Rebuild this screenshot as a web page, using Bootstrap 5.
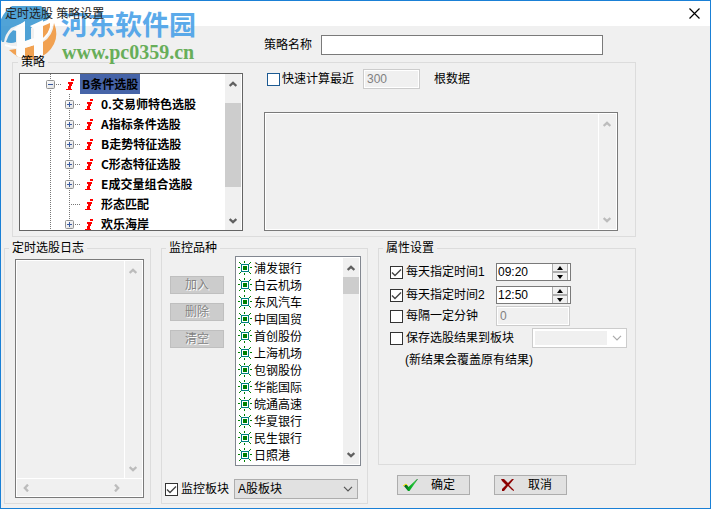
<!DOCTYPE html>
<html lang="zh-CN">
<head>
<meta charset="utf-8">
<meta name="viewport" content="width=device-width, initial-scale=1">
<title>定时选股 策略设置</title>
<link href="https://cdn.jsdelivr.net/npm/bootstrap@5.3.0/dist/css/bootstrap.min.css" rel="stylesheet">
<style>
body{font-family:"Liberation Sans","Noto Sans CJK SC",sans-serif;font-size:12px;line-height:14px;color:#000;background:#f0f0f0}
.window{min-height:100vh;border:1px solid #1a80d6;padding-bottom:4px}
.titlebar{height:25px;background:#fff;padding:0 10px 0 4px;color:#222}
.plain{border:0;background:none;padding:0;line-height:0;display:block}
.workspace{padding:0 74px 0 3px}
.name-row{padding:9px 33px 0 260px;gap:9px}
.field{height:20px;min-width:0;border:1px solid #7a7a7a;border-radius:0;background:#fff;padding:0 3px;font-size:12px;line-height:14px;color:#000;outline-offset:0}
.field:disabled{border:1px solid #ccc;background:#f0f0f0;box-shadow:inset 0 0 0 1px #fff;color:#808080}
.group{border:1px solid #dcdcdc;margin:0;padding:0;min-width:0}
.group > legend{float:none;width:auto;margin:0 0 0 5px;padding:0 3px;font-size:12px;line-height:14px}
.over{position:relative;z-index:2}
.strategy{margin:0 0 4px 8px}
.strategy-body{display:grid;grid-template-columns:224fr 354fr;gap:21px;padding:0 17px 5px 6px}
.lower{display:grid;grid-template-columns:147fr 207fr 258fr;gap:10px}
.lower legend{margin-left:4px}
.tree{height:158px;margin-top:4px;border:1px solid #646464;background:#fff;padding-right:1px;overflow:hidden}
.tree-list{margin:0;padding:0 0 0 26px;list-style:none;overflow:hidden;font-family:"Noto Sans CJK SC",sans-serif;font-weight:700}
.tree-list li{display:flex;height:20px;align-items:center;white-space:nowrap}
.tree-list svg{display:block;flex:none}
.node{line-height:20px;padding:0 2px;color:#000;text-decoration:none}
.node.chosen{background:#4664a8}
.scroll-v{width:16px;flex:none;background:#f0f0f0;display:flex;flex-direction:column}
.scroll-v button,.scroll-h button{flex:none;display:flex;align-items:center;justify-content:center;color:#606060}
.scroll-v button{height:19px}
.thumb{background:#cdcdcd}
.scroll-v.muted button,.scroll-h.muted button{color:#bcbcbc}
.sunken{border:1px solid #7a7a7a;box-shadow:inset 0 0 0 1px #fff;padding:1px}
.sunken textarea{border:0;background:none;resize:none;min-width:0;padding:2px;font-size:12px;display:block}
.sunken .scroll-v{width:18px;border-left:1px solid #fff;padding-right:2px}
.scroll-h{height:18px;border-top:1px solid #fff;padding-right:17px}
.scroll-h button{width:17px}
.output{height:119px}
.fast-row{gap:9px}
.fast-row label{padding-left:3px}
.fast-row span{padding-left:5px}
.log-body{padding:4px 6px 5px 10px}
.log-box{height:239px}
.tick{width:13px;height:13px;margin:0 3px 0 0;float:none;flex:none;border:1px solid #333;border-radius:0!important;background-color:#fff;background-size:11px 11px}
.tick:checked{background-color:#fff;border-color:#333;background-image:url("data:image/svg+xml,%3Csvg xmlns='http://www.w3.org/2000/svg' viewBox='0 0 11 11'%3E%3Cpath d='M1 5.5 4 8.5 10 2.5' fill='none' stroke='%23444' stroke-width='1.4'/%3E%3C/svg%3E")}
.tick.accent{border-color:#1c5a92;margin-right:2px}
.flat{border:1px solid #adadad;border-radius:0;background:#e1e1e1;padding:0;font-size:12px;line-height:14px;color:#000}
.edit{width:54px;height:18px}
.edit:disabled{background:#ccc;border-color:#bfbfbf;color:#838383;text-shadow:1px 1px 0 #fff;opacity:1}
.edits{gap:9px;padding-top:20px}
.monitor-body{padding:1px 6px 0 8px;gap:11px}
.stocks{height:210px;border:1px solid #828790;background:#fff;padding:1px 1px 1px 2px}
.stocks ul{margin:0;padding:2px 0 0;list-style:none;overflow:hidden}
.stocks li{height:17px;display:flex;align-items:center;gap:1px;white-space:nowrap}
.board{padding:13px 9px 4px 3px;gap:5px}
.drop{height:20px;border:1px solid #adadad;border-radius:0;font-size:12px;line-height:14px;padding:0 20px 0 3px;color:#000;background-color:#e1e1e1;background-size:10px 6px;background-position:right 4px center;background-image:url("data:image/svg+xml,%3Csvg xmlns='http://www.w3.org/2000/svg' viewBox='0 0 10 6'%3E%3Cpath d='M1 .8 5 4.8 9 .8' fill='none' stroke='%23555' stroke-width='1.2'/%3E%3C/svg%3E")}
.drop.off:disabled{width:95px;border-color:#ccc;background-color:#fff;background-image:linear-gradient(#f0f0f0,#f0f0f0),url("data:image/svg+xml,%3Csvg xmlns='http://www.w3.org/2000/svg' viewBox='0 0 10 6'%3E%3Cpath d='M1 .8 5 4.8 9 .8' fill='none' stroke='%23aaa' stroke-width='1.2'/%3E%3C/svg%3E");background-size:72px 14px,10px 6px;background-position:left 2px center,right 4px center;background-repeat:no-repeat}
.options{height:224px}
.options-body{padding:5px 8px 0 11px}
.opt{display:flex;align-items:center}
.h24{height:24px}.h22{height:22px}.h20{height:20px}
.opt-name{width:106px;flex:none;display:flex;align-items:center;white-space:nowrap}
.opt-name.wide{width:142px}
.spin{width:75px;height:18px;border:1px solid #7a7a7a;background:#fff;display:flex;padding-right:2px}
.spin input{border:0;padding:0 1px;width:55px;flex:none;font-size:12px;line-height:14px;background:none}
.spin-btns{width:16px;display:flex;flex-direction:column;justify-content:center;background:#f0f0f0;border:solid #adadad;border-width:0 1px}
.spin-btns button{height:7px;display:flex;align-items:center;justify-content:center}
.spin-btns button+button{border-top:2px solid #adadad;height:9px}
.w-num{width:74px}
.w-bars{width:57px}
.note{padding-left:15px}
.actions{gap:24px;padding:10px 0 0 19px}
.act{width:73px;height:20px;display:flex;align-items:center;padding-left:5px;gap:12px}
.watermark{position:absolute;left:0;top:0;pointer-events:none;opacity:.88}
.wm-mark{position:absolute;left:0;top:5px}
.wm-name{position:absolute;left:60px;top:7px;font:700 27px/32px "Noto Sans CJK SC",sans-serif;color:#459fe8;white-space:nowrap}
.wm-site{position:absolute;left:61px;top:40px;font:700 20px/22px "Liberation Serif",serif;color:#55a545;white-space:nowrap}
</style>
<script src="https://cdn.jsdelivr.net/npm/bootstrap@5.3.0/dist/js/bootstrap.bundle.min.js"></script>
</head>
<body>
<svg width="0" height="0" class="position-absolute" aria-hidden="true">
  <defs>
    <linearGradient id="boxfill" x2="1" y2="1"><stop stop-color="#fff"/><stop offset="1" stop-color="#ddd"/></linearGradient>
    <linearGradient id="tickfill" x2="1"><stop stop-color="#0a4a20"/><stop offset=".4" stop-color="#00b020"/><stop offset=".75" stop-color="#30c040"/><stop offset="1" stop-color="#287838"/></linearGradient>
  </defs>
  <symbol id="guide" viewBox="0 0 19 20"><path d="M4.500 0v20" stroke="#777" stroke-dasharray="1 1"/></symbol>
  <symbol id="plus" viewBox="0 0 16 20"><path d="M4.500 0v20M10 10.500h6" stroke="#777" stroke-dasharray="1 1"/><rect x=".5" y="6.500" width="8" height="8" rx="1" fill="url(#boxfill)" stroke="#919191"/><path d="M2 10.500h5M4.500 8v5" stroke="#3a5aa0"/></symbol>
  <symbol id="minus" viewBox="0 0 16 20"><path d="M4.500 0v20M10 10.500h6" stroke="#777" stroke-dasharray="1 1"/><rect x=".5" y="6.500" width="8" height="8" rx="1" fill="url(#boxfill)" stroke="#919191"/><path d="M2 10.500h5" stroke="#3a5aa0"/></symbol>
  <symbol id="leaf" viewBox="0 0 16 20"><path d="M4.500 0v20M6 10.500h10" stroke="#777" stroke-dasharray="1 1"/></symbol>
  <symbol id="info" viewBox="0 0 18 20"><path d="M9 5h3v2H9zM6 8h5v2h-1v2H9v3h1v1H4v-1h2v-3h1v-2H6z" fill="#f00"/></symbol>
  <symbol id="up" viewBox="0 0 8 6"><path d="M.6 5 4 1.800 7.400 5" fill="none" stroke="currentColor" stroke-width="2.300"/></symbol>
  <symbol id="down" viewBox="0 0 8 6"><path d="M.6 1 4 4.200 7.400 1" fill="none" stroke="currentColor" stroke-width="2.300"/></symbol>
  <symbol id="left" viewBox="0 0 6 8"><path d="M5 .6 1.800 4 5 7.400" fill="none" stroke="currentColor" stroke-width="2.300"/></symbol>
  <symbol id="right" viewBox="0 0 6 8"><path d="M1 .6 4.200 4 1 7.400" fill="none" stroke="currentColor" stroke-width="2.300"/></symbol>
  <symbol id="star" viewBox="0 0 15 15"><rect x="3.500" y="3.500" width="7" height="7" fill="#fff" stroke="#008080"/><path d="M5 5h4v4H5zM6 0h1v2H6zM6 12h1v2H6zM0 6h2v1H0zM12 6h2v1h-2zM1 1h1v1H1zM2 2h1v1H2zM12 1h1v1h-1zM11 2h1v1h-1zM1 12h1v1H1zM2 11h1v1H2zM12 12h1v1h-1zM11 11h1v1h-1z" fill="#008000"/></symbol>
</svg>

<div class="window position-relative">
  <header class="titlebar d-flex justify-content-between align-items-center">
    <span class="over">定时选股&nbsp;策略设置</span>
    <button class="plain" aria-label="关闭"><svg width="11" height="11"><path d="M.5.5l10 10M10.500.5l-10 10" stroke="#000" stroke-width="1.200"/></svg></button>
  </header>

  <main class="workspace">
    <div class="name-row d-flex align-items-center">
      <label for="sname" class="text-nowrap">策略名称</label>
      <input id="sname" class="field flex-grow-1" type="text">
    </div>

    <fieldset class="group strategy">
      <legend class="over">策略</legend>
      <div class="strategy-body">
        <div class="tree d-flex">
          <ul class="tree-list flex-grow-1">
            <li><button class="plain" aria-label="折叠"><svg width="16" height="20"><use href="#minus"/></svg></button><svg width="18" height="20"><use href="#info"/></svg><a href="#" class="node chosen">B条件选股</a></li>
            <li><svg width="19" height="20"><use href="#guide"/></svg><button class="plain" aria-label="展开"><svg width="16" height="20"><use href="#plus"/></svg></button><svg width="18" height="20"><use href="#info"/></svg><a href="#" class="node">0.交易师特色选股</a></li>
            <li><svg width="19" height="20"><use href="#guide"/></svg><button class="plain" aria-label="展开"><svg width="16" height="20"><use href="#plus"/></svg></button><svg width="18" height="20"><use href="#info"/></svg><a href="#" class="node">A指标条件选股</a></li>
            <li><svg width="19" height="20"><use href="#guide"/></svg><button class="plain" aria-label="展开"><svg width="16" height="20"><use href="#plus"/></svg></button><svg width="18" height="20"><use href="#info"/></svg><a href="#" class="node">B走势特征选股</a></li>
            <li><svg width="19" height="20"><use href="#guide"/></svg><button class="plain" aria-label="展开"><svg width="16" height="20"><use href="#plus"/></svg></button><svg width="18" height="20"><use href="#info"/></svg><a href="#" class="node">C形态特征选股</a></li>
            <li><svg width="19" height="20"><use href="#guide"/></svg><button class="plain" aria-label="展开"><svg width="16" height="20"><use href="#plus"/></svg></button><svg width="18" height="20"><use href="#info"/></svg><a href="#" class="node">E成交量组合选股</a></li>
            <li><svg width="19" height="20"><use href="#guide"/></svg><svg width="16" height="20"><use href="#leaf"/></svg><svg width="18" height="20"><use href="#info"/></svg><a href="#" class="node">形态匹配</a></li>
            <li><svg width="19" height="20"><use href="#guide"/></svg><button class="plain" aria-label="展开"><svg width="16" height="20"><use href="#plus"/></svg></button><svg width="18" height="20"><use href="#info"/></svg><a href="#" class="node">欢乐海岸</a></li>
          </ul>
          <div class="scroll-v">
            <button class="plain" aria-label="向上"><svg width="8" height="6"><use href="#up"/></svg></button>
            <div style="flex:10"></div><div class="thumb" style="flex:85"></div><div style="flex:24"></div>
            <button class="plain" aria-label="向下"><svg width="8" height="6"><use href="#down"/></svg></button>
          </div>
        </div>

        <div class="d-flex flex-column justify-content-between">
          <div class="fast-row d-flex align-items-center">
            <label class="d-flex align-items-center text-nowrap" for="fast"><input id="fast" type="checkbox" class="form-check-input tick accent">快速计算最近</label>
            <input class="field w-bars" type="text" value="300" disabled aria-label="数据根数">
            <span class="text-nowrap">根数据</span>
          </div>
          <div class="sunken output d-flex">
            <textarea class="flex-grow-1" readonly aria-label="策略说明"></textarea>
            <div class="scroll-v muted justify-content-between">
              <button class="plain" aria-label="向上"><svg width="8" height="6"><use href="#up"/></svg></button>
              <button class="plain" aria-label="向下"><svg width="8" height="6"><use href="#down"/></svg></button>
            </div>
          </div>
        </div>
      </div>
    </fieldset>

    <div class="lower">
      <fieldset class="group">
        <legend>定时选股日志</legend>
        <div class="log-body">
          <div class="sunken log-box d-flex flex-column">
            <div class="d-flex flex-grow-1">
              <textarea class="flex-grow-1 w-100" readonly aria-label="定时选股日志"></textarea>
              <div class="scroll-v muted justify-content-between">
                <button class="plain" aria-label="向上"><svg width="8" height="6"><use href="#up"/></svg></button>
                <button class="plain" aria-label="向下"><svg width="8" height="6"><use href="#down"/></svg></button>
              </div>
            </div>
            <div class="scroll-h muted d-flex justify-content-between">
              <button class="plain" aria-label="向左"><svg width="6" height="8"><use href="#left"/></svg></button>
              <button class="plain" aria-label="向右"><svg width="6" height="8"><use href="#right"/></svg></button>
            </div>
          </div>
        </div>
      </fieldset>

      <fieldset class="group">
        <legend>监控品种</legend>
        <div class="monitor-body d-flex">
          <div class="edits d-flex flex-column">
            <button class="flat edit" disabled>加入</button>
            <button class="flat edit" disabled>删除</button>
            <button class="flat edit" disabled>清空</button>
          </div>
          <div class="stocks d-flex flex-grow-1">
            <ul class="flex-grow-1">
              <li><svg width="15" height="15"><use href="#star"/></svg>浦发银行</li>
              <li><svg width="15" height="15"><use href="#star"/></svg>白云机场</li>
              <li><svg width="15" height="15"><use href="#star"/></svg>东风汽车</li>
              <li><svg width="15" height="15"><use href="#star"/></svg>中国国贸</li>
              <li><svg width="15" height="15"><use href="#star"/></svg>首创股份</li>
              <li><svg width="15" height="15"><use href="#star"/></svg>上海机场</li>
              <li><svg width="15" height="15"><use href="#star"/></svg>包钢股份</li>
              <li><svg width="15" height="15"><use href="#star"/></svg>华能国际</li>
              <li><svg width="15" height="15"><use href="#star"/></svg>皖通高速</li>
              <li><svg width="15" height="15"><use href="#star"/></svg>华夏银行</li>
              <li><svg width="15" height="15"><use href="#star"/></svg>民生银行</li>
              <li><svg width="15" height="15"><use href="#star"/></svg>日照港</li>
            </ul>
            <div class="scroll-v">
              <button class="plain" aria-label="向上"><svg width="8" height="6"><use href="#up"/></svg></button>
              <div class="thumb" style="flex:17"></div><div style="flex:154"></div>
              <button class="plain" aria-label="向下"><svg width="8" height="6"><use href="#down"/></svg></button>
            </div>
          </div>
        </div>
        <div class="board d-flex align-items-center">
          <label class="d-flex align-items-center text-nowrap" for="watch"><input id="watch" type="checkbox" class="form-check-input tick" checked>监控板块</label>
          <select class="form-select drop" aria-label="板块"><option>A股板块</option></select>
        </div>
      </fieldset>

      <div>
        <fieldset class="group options">
          <legend>属性设置</legend>
          <div class="options-body">
            <div class="opt h24">
              <label class="opt-name" for="t1"><input id="t1" type="checkbox" class="form-check-input tick" checked>每天指定时间1</label>
              <div class="spin"><input type="text" value="09:20" aria-label="时间1"><div class="spin-btns"><button class="plain" aria-label="增加"><svg width="6" height="4"><path d="M0 4 3 0l3 4z"/></svg></button><button class="plain" aria-label="减少"><svg width="6" height="4"><path d="M0 0h6L3 4z"/></svg></button></div></div>
            </div>
            <div class="opt h22">
              <label class="opt-name" for="t2"><input id="t2" type="checkbox" class="form-check-input tick" checked>每天指定时间2</label>
              <div class="spin"><input type="text" value="12:50" aria-label="时间2"><div class="spin-btns"><button class="plain" aria-label="增加"><svg width="6" height="4"><path d="M0 4 3 0l3 4z"/></svg></button><button class="plain" aria-label="减少"><svg width="6" height="4"><path d="M0 0h6L3 4z"/></svg></button></div></div>
            </div>
            <div class="opt h20">
              <label class="opt-name" for="t3"><input id="t3" type="checkbox" class="form-check-input tick">每隔一定分钟</label>
              <input class="field w-num" type="text" value="0" disabled aria-label="间隔分钟">
            </div>
            <div class="opt h24">
              <label class="opt-name wide" for="t4"><input id="t4" type="checkbox" class="form-check-input tick">保存选股结果到板块</label>
              <select class="form-select drop off" disabled aria-label="目标板块"><option></option></select>
            </div>
            <div class="opt h20 note text-nowrap">(新结果会覆盖原有结果)</div>
          </div>
        </fieldset>
        <div class="actions d-flex">
          <button class="flat act"><svg width="16" height="14"><path d="M1 8 3.500 6 5.500 9 14 1h1L6.500 13H5z" fill="url(#tickfill)"/><path d="M0 8 3 6l1.500 1.500" fill="none" stroke="#e8e000"/></svg>确定</button>
          <button class="flat act"><svg width="16" height="14"><path d="M1 1h3l4 4 4-4h2L9 7l5 5v1l-2-1-4-4-4 5H2v-2l4-4-4-4z" fill="#8b0000"/></svg>取消</button>
        </div>
      </div>
    </div>
  </main>

  <div class="watermark" aria-hidden="true">
    <svg class="wm-mark" width="58" height="56" viewBox="0 0 58 56">
      <path d="M1 36A27 27 0 0 1 50 11Q46 15 41 16L30 22V33L24 36V16L10 22Q4 28 3 36z" fill="#3897d2"/>
      <path d="M5 36Q8 26 15 22V36Q10 38 5 36z" fill="#3897d2"/>
      <path d="M53 17Q60 34 46 47 27 62 8 44L15 43V50L24 53V42L33 39V53L42 49V36Q52 30 53 17z" fill="#f2973c"/>
      <path d="M42 33V20L49 17Q50 26 42 33z" fill="#f2973c"/>
      <path d="M11 24 24 15V53L16 50V25zM29 20 42 14V49L33 54V23zM24 35 33 32V37L24 40z" fill="#fff"/>
      <path d="M4 39Q19 45 38 36 50 29 51 16" fill="none" stroke="#fff" stroke-width="2"/>
    </svg>
    <span class="wm-name">河东软件园</span>
    <span class="wm-site">www.pc0359.cn</span>
  </div>
</div>
</body>
</html>
